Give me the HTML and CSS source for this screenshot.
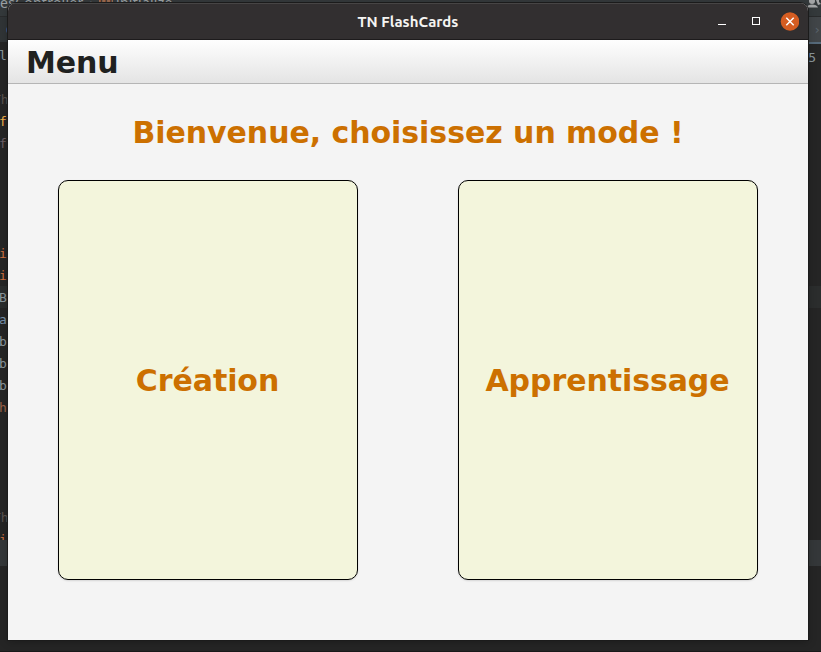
FILE: index.html
```html
<!DOCTYPE html>
<html lang="fr">
<head>
<meta charset="utf-8">
<title>TN FlashCards</title>
<link rel="stylesheet" href="styles.css">
</head>
<body>
<div class="editor">
  <div class="breadcrumb">
    <span>esController</span><span class="chevron">›</span><span class="method">m</span><span>initialize</span>
    <svg class="user" width="14" height="10" viewBox="0 0 14 10"><circle cx="5" cy="1" r="3"/><path d="M0 7.500c0-4 10-4 11 0z"/><path d="M9 0h3v2l2 2-3 1z"/></svg>
  </div>
  <div class="tabs"><span class="tab-dot"></span><span class="tab-end">›</span></div>
  <div class="code">
    <div class="line"><span>l</span><span class="right">5</span></div>
    <div class="line"></div>
    <div class="line dim"><span class="wide">Th</span></div>
    <div class="line gold"><span>f</span></div>
    <div class="line violet"><span>f</span></div>
    <div class="line"></div>
    <div class="line"></div>
    <div class="line"></div>
    <div class="line"></div>
    <div class="line orange"><span>i</span></div>
    <div class="line orange"><span>i</span></div>
    <div class="line current"><span>B</span></div>
    <div class="line blue"><span>a</span></div>
    <div class="line"><span>b</span></div>
    <div class="line"><span>b</span></div>
    <div class="line"><span>b</span></div>
    <div class="line brown"><span>h</span></div>
    <div class="line"></div>
    <div class="line"></div>
    <div class="line"></div>
    <div class="line"></div>
    <div class="line dim"><span class="wide">Th</span></div>
    <div class="line orange cut"><span>i</span></div>
  </div>
  <div class="panel-head"></div>
  <div class="panel"></div>
  <div class="status"></div>
</div>

<div class="window">
  <header class="titlebar">
    <h1 class="title">TN FlashCards</h1>
    <div class="controls">
      <svg width="84" height="20" viewBox="0 0 84 20">
        <path d="M3 12.5h8" stroke="#fff"/>
        <rect x="37.500" y="5.500" width="7" height="7" fill="none" stroke="#fff"/>
        <circle cx="75" cy="9.500" r="9.300" fill="#d65d22"/>
        <path d="M71.300 5.800l7.400 7.400M78.700 5.800l-7.400 7.400" stroke="#fff" stroke-width="1.500"/>
      </svg>
    </div>
  </header>
  <nav class="menubar"><span class="menu">Menu</span></nav>
  <main class="content">
    <h2 class="welcome">Bienvenue, choisissez un mode !</h2>
    <div class="cards">
      <button class="card">Création</button>
      <button class="card">Apprentissage</button>
    </div>
  </main>
</div>
</body>
</html>
```
FILE: styles.css
```css
* { box-sizing: border-box; }

body {
  position: relative;
  width: 821px;
  height: 652px;
  margin: 0;
  overflow: hidden;
  background: #252525;
  font-family: "DejaVu Sans", sans-serif;
}

/* Editor behind the window */
.editor {
  display: flex;
  flex-direction: column;
  height: 652px;
  color: #8b979c;
  font: 13px/24px "DejaVu Sans Mono", monospace;
}

.breadcrumb {
  display: flex;
  align-items: flex-start;
  height: 17px;
  background: #34393b;
  border-bottom: 1px solid #292b2c;
  color: #9aa0a3;
  font: 14px/14px "Noto Sans", sans-serif;
  letter-spacing: .25px;
}

.breadcrumb span { margin-top: -4px; }
.breadcrumb .chevron { margin: -4px 5px 0 6px; color: #5d6265; }
.breadcrumb .method {
  width: 14px;
  height: 14px;
  margin: -8px 3px 0 0;
  border-radius: 3px;
  background: #9b6a50;
  color: #3a2c25;
  line-height: 16px;
  text-align: center;
}
.user { margin-left: auto; fill: #a3a5a6; }

.tabs {
  display: flex;
  flex: 0 0 27px;
  align-items: center;
  justify-content: space-between;
  background: linear-gradient(90deg, #303436 50%, #414548 50%);
  border-bottom: 2px solid;
  border-image: linear-gradient(90deg, #252525 50%, #566a7a 50%) 2;
}
.tab-dot { width: 12px; height: 10px; margin-left: 6px; border-radius: 5px; background: #3a5487; }
.tab-end { color: #59636b; }

.code { height: 496px; overflow: hidden; }
.line { display: flex; justify-content: space-between; height: 22px; }
.line span { margin-left: -1px; }
.line .right { margin-right: 5px; line-height: 28px; }
.line .wide { margin-left: -7px; }
.dim { color: #5b5350; }
.gold { color: #f0b04a; }
.violet { color: #6b5e66; }
.orange { color: #d07040; }
.brown { color: #9c6248; }
.blue { color: #7890a8; }
.current { background: #2b2d2d; }
.cut { height: 12px; overflow: hidden; }

.panel-head { height: 26px; background: #343739; }
.panel { flex: 1; background: #252525; }
.status { height: 1px; background: #191919; }

/* Application window */
.window {
  position: absolute;
  top: 3px;
  left: 8px;
  width: 800px;
  height: 637px;
  border-radius: 8px 8px 0 0;
  background: #f4f4f4;
  box-shadow: 0 0 0 1px #1b1b1b, 0 2px 8px rgba(0, 0, 0, .25);
  overflow: hidden;
}

.titlebar {
  display: grid;
  grid-template-columns: 1fr auto 1fr;
  align-items: center;
  height: 37px;
  background: #322f30;
  border-top: 1px solid #474545;
  border-bottom: 1px solid #1d1b1c;
}

.title {
  grid-column: 2;
  margin: 0;
  color: #f5f4f2;
  font: bold 15px/20px Ubuntu, "Noto Sans", sans-serif;
  letter-spacing: 0;
}

.controls { display: flex; justify-self: end; margin-right: 9px; }

.menubar {
  display: flex;
  align-items: center;
  height: 44px;
  padding: 3px 18px 0;
  background: linear-gradient(#fefefe, #e4e4e4);
  border-bottom: 1px solid #b5b5b5;
}
.menu {
  color: #1f2120;
  font-size: 30px;
  font-weight: bold;
  line-height: 36px;
  letter-spacing: -.1px;
}

.content { display: flex; flex-direction: column; align-items: center; padding-top: 31px; }
.welcome { margin: 0; color: #cc7000; font-size: 30px; line-height: 36px; letter-spacing: -.05px; }

.cards { display: flex; gap: 100px; margin-top: 29px; }
.card {
  width: 300px;
  height: 400px;
  padding: 2px 1px 0 0;
  border: 1px solid #000;
  border-radius: 10px;
  background: #f3f5dc;
  box-shadow: 0 1px 2px rgba(0, 0, 0, .13);
  color: #cc7000;
  font: bold 30px/36px "DejaVu Sans", sans-serif;
  letter-spacing: -.08px;
}
```
